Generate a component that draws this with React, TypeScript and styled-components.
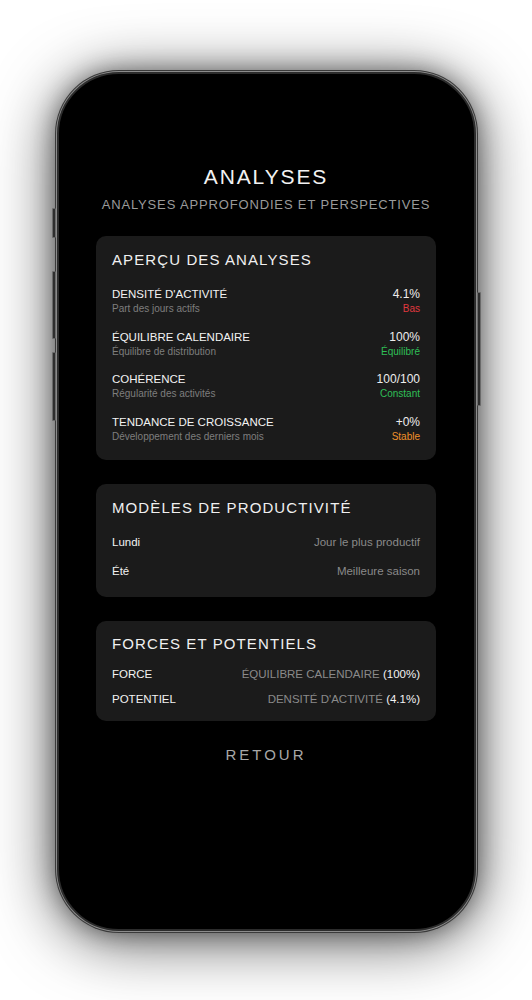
import styled, { createGlobalStyle } from "styled-components";

const GlobalStyle = createGlobalStyle`
  html, body {
    margin: 0;
    padding: 0;
    background: #ffffff;
  }
  body {
    font-family: "Liberation Sans", Arial, sans-serif;
    -webkit-font-smoothing: antialiased;
  }
`;

const Stage = styled.div`
  width: 532px;
  height: 1000px;
  display: flex;
  justify-content: center;
  padding-top: 72px;
  box-sizing: border-box;
  overflow: hidden;
`;

const Phone = styled.div`
  position: relative;
  width: 419px;
  height: 859px;
  box-sizing: border-box;
  background: #000;
  border-radius: 62px;
  border: 2px solid #2c2c2c;
  box-shadow:
    0 0 0 1px #8c8c8c,
    0 0 0 2px #3a3a3a,
    0 0 24px rgba(0, 0, 0, 0.45),
    0 8px 64px rgba(0, 0, 0, 0.7);
  display: flex;
  flex-direction: column;
  align-items: center;
  padding: 91px 38px 0;
`;

const SideButton = styled.span<{ $side: "left" | "right"; $top: number; $height: number }>`
  position: absolute;
  ${({ $side }) => ($side === "left" ? "left: -7px;" : "right: -7px;")}
  top: ${({ $top }) => $top}px;
  width: 4px;
  height: ${({ $height }) => $height}px;
  background: #2e2e2e;
  border: 1px solid #6a6a6a;
  border-radius: 1px;
  box-sizing: border-box;
`;

const Title = styled.h1`
  margin: 0;
  font-size: 21px;
  line-height: 24px;
  font-weight: 400;
  letter-spacing: 1.9px;
  color: #f2f2f2;
  text-align: center;
`;

const Subtitle = styled.p`
  margin: 8px 0 0;
  font-size: 13px;
  line-height: 15px;
  letter-spacing: 0.85px;
  color: #9a9a9a;
  text-align: center;
`;

const Cards = styled.div`
  width: 340px;
  margin-top: 24px;
  display: flex;
  flex-direction: column;
  gap: 24px;
`;

const Card = styled.section<{ $pad: string }>`
  background: #1b1b1b;
  border-radius: 10px;
  padding: ${({ $pad }) => $pad};
  display: flex;
  flex-direction: column;
`;

const CardTitle = styled.h2<{ $gap: number }>`
  margin: 0 0 ${({ $gap }) => $gap}px;
  font-size: 15px;
  line-height: 18px;
  font-weight: 400;
  letter-spacing: 1.1px;
  color: #f0f0f0;
`;

const List = styled.div<{ $gap: number }>`
  display: flex;
  flex-direction: column;
  gap: ${({ $gap }) => $gap}px;
`;

const MetricRow = styled.div`
  display: flex;
  justify-content: space-between;
  align-items: flex-start;
`;

const Col = styled.div<{ $right?: boolean }>`
  display: flex;
  flex-direction: column;
  gap: 2px;
  align-items: ${({ $right }) => ($right ? "flex-end" : "flex-start")};
`;

const Label = styled.span`
  font-size: 11.5px;
  line-height: 14px;
  color: #f2f2f2;
`;

const Hint = styled.span<{ $color?: string }>`
  font-size: 10px;
  line-height: 12px;
  color: ${({ $color }) => $color || "#7e7e7e"};
`;

const Value = styled.span`
  font-size: 12px;
  line-height: 14px;
  color: #ededed;
`;

const PairRow = styled.div`
  display: flex;
  justify-content: space-between;
  align-items: center;
  font-size: 11.5px;
  line-height: 14px;
`;

const PairLabel = styled.span`
  color: #f2f2f2;
`;

const PairText = styled.span`
  color: #8a8a8a;
`;

const Strong = styled.span`
  color: #f2f2f2;
`;

const BackButton = styled.button`
  margin-top: 24px;
  background: none;
  border: none;
  padding: 0;
  font-family: "Liberation Sans", Arial, sans-serif;
  font-size: 15px;
  line-height: 20px;
  letter-spacing: 3px;
  color: #a8a8a8;
  cursor: pointer;
`;

const metrics = [
  { label: "DENSITÉ D'ACTIVITÉ", hint: "Part des jours actifs", value: "4.1%", status: "Bas", color: "#e0383e" },
  { label: "ÉQUILIBRE CALENDAIRE", hint: "Équilibre de distribution", value: "100%", status: "Équilibré", color: "#2fbf57" },
  { label: "COHÉRENCE", hint: "Régularité des activités", value: "100/100", status: "Constant", color: "#2fbf57" },
  { label: "TENDANCE DE CROISSANCE", hint: "Développement des derniers mois", value: "+0%", status: "Stable", color: "#f0902a" },
];

const patterns = [
  { label: "Lundi", text: "Jour le plus productif" },
  { label: "Été", text: "Meilleure saison" },
];

const strengths = [
  { label: "FORCE", text: "ÉQUILIBRE CALENDAIRE", value: "(100%)" },
  { label: "POTENTIEL", text: "DENSITÉ D'ACTIVITÉ", value: "(4.1%)" },
];

export default function App() {
  return (
    <>
      <GlobalStyle />
      <Stage>
        <Phone>
          <SideButton $side="left" $top={134} $height={30} />
          <SideButton $side="left" $top={197} $height={68} />
          <SideButton $side="left" $top={278} $height={69} />
          <SideButton $side="right" $top={218} $height={114} />

          <Title>ANALYSES</Title>
          <Subtitle>ANALYSES APPROFONDIES ET PERSPECTIVES</Subtitle>

          <Cards>
            <Card $pad="15px 16px 17px">
              <CardTitle $gap={18}>APERÇU DES ANALYSES</CardTitle>
              <List $gap={14.5}>
                {metrics.map((m) => (
                  <MetricRow key={m.label}>
                    <Col>
                      <Label>{m.label}</Label>
                      <Hint>{m.hint}</Hint>
                    </Col>
                    <Col $right>
                      <Value>{m.value}</Value>
                      <Hint $color={m.color}>{m.status}</Hint>
                    </Col>
                  </MetricRow>
                ))}
              </List>
            </Card>

            <Card $pad="15px 16px 19px">
              <CardTitle $gap={18}>MODÈLES DE PRODUCTIVITÉ</CardTitle>
              <List $gap={15}>
                {patterns.map((p) => (
                  <PairRow key={p.label}>
                    <PairLabel>{p.label}</PairLabel>
                    <PairText>{p.text}</PairText>
                  </PairRow>
                ))}
              </List>
            </Card>

            <Card $pad="14px 16px 15px">
              <CardTitle $gap={14}>FORCES ET POTENTIELS</CardTitle>
              <List $gap={11}>
                {strengths.map((s) => (
                  <PairRow key={s.label}>
                    <PairLabel>{s.label}</PairLabel>
                    <PairText>
                      {s.text} <Strong>{s.value}</Strong>
                    </PairText>
                  </PairRow>
                ))}
              </List>
            </Card>
          </Cards>

          <BackButton>RETOUR</BackButton>
        </Phone>
      </Stage>
    </>
  );
}
